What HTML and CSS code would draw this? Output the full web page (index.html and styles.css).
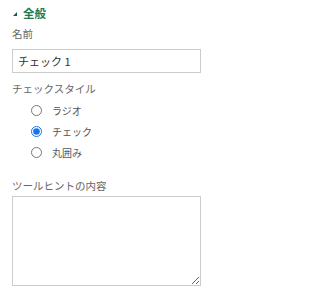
FILE: index.html
```html
<!DOCTYPE html>
<html lang="ja">
<head>
<meta charset="utf-8">
<link rel="stylesheet" href="styles.css">
</head>
<body>
<div class="panel">
  <div class="section-head">
    <span class="tri"></span>
    <span class="section-title">全般</span>
  </div>
  <div class="field-label first">名前</div>
  <input class="text-input" type="text" value="チェック 1">
  <div class="field-label style-label">チェックスタイル</div>
  <div class="radio-list">
    <label class="radio-row"><input type="radio" name="cs" class="radio"><span>ラジオ</span></label>
    <label class="radio-row"><input type="radio" name="cs" class="radio" checked><span>チェック</span></label>
    <label class="radio-row"><input type="radio" name="cs" class="radio"><span>丸囲み</span></label>
  </div>
  <div class="field-label tip-label">ツールヒントの内容</div>
  <textarea class="text-area"></textarea>
</div>
</body>
</html>
```
FILE: styles.css
```css
html, body {
  margin: 0;
  padding: 0;
  background: #ffffff;
}
.panel {
  width: 189px;
  padding: 6px 0 0 12px;
  font-family: "Noto Sans CJK JP", "Noto Sans", sans-serif;
  display: flex;
  flex-direction: column;
}
.section-head {
  display: flex;
  align-items: center;
  height: 14px;
}
.tri {
  width: 0;
  height: 0;
  border-style: solid;
  border-width: 0 0 4px 4px;
  border-color: transparent transparent #1d5a3a transparent;
  margin: 2px 6px 0 1px;
}
.section-title {
  font-size: 11.5px;
  font-weight: bold;
  color: #1f7a4d;
  line-height: 14px;
}
.field-label {
  font-size: 10.5px;
  line-height: 15px;
  color: #666666;
}
.field-label.first {
  margin-top: 6px;
}
.text-input {
  margin: 8px 0 0 0;
  box-sizing: border-box;
  width: 189px;
  height: 24px;
  border: 1px solid #cccccc;
  border-radius: 0;
  padding: 0 5px;
  font-family: "Noto Sans CJK JP", "Noto Sans", sans-serif;
  font-size: 11px;
  color: #333333;
  outline: none;
}
.style-label {
  margin-top: 8px;
}
.radio-list {
  display: flex;
  flex-direction: column;
  margin-top: 4px;
  padding-left: 19px;
}
.radio-row {
  display: flex;
  align-items: center;
  height: 21px;
  gap: 10px;
  font-size: 10px;
  color: #555555;
}
.radio {
  width: 11px;
  height: 11px;
  margin: 0;
  accent-color: #1a73e8;
}
.tip-label {
  margin-top: 15px;
}
.text-area {
  margin: 3px 0 0 0;
  box-sizing: border-box;
  width: 189px;
  height: 90px;
  border: 1px solid #cccccc;
  border-radius: 0;
  padding: 4px;
  font-family: "Noto Sans CJK JP", "Noto Sans", sans-serif;
  font-size: 11px;
  outline: none;
}
```
